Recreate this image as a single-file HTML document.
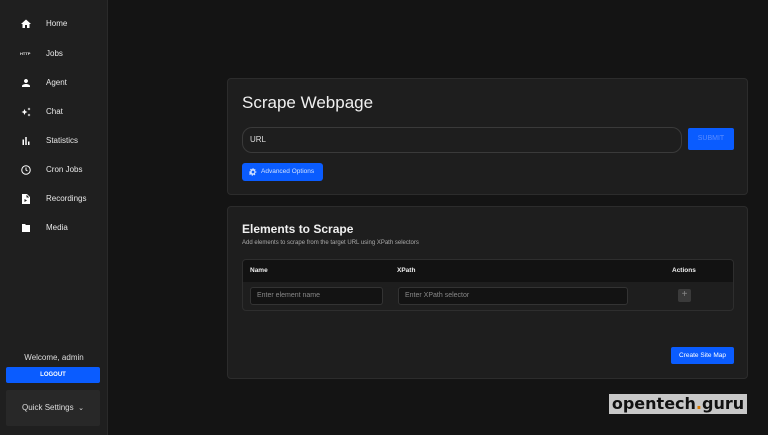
<!DOCTYPE html>
<html><head><meta charset="utf-8"><style>
*{box-sizing:border-box;margin:0;padding:0}
body{width:768px;height:435px;background:#141414;font-family:"Liberation Sans",sans-serif;color:#eee;position:relative;overflow:hidden}
.sb{position:absolute;left:0;top:0;width:108px;height:435px;background:#1f1f1f;border-right:1px solid #2a2a2a}
.it{position:absolute;left:20px;font-size:8px;color:#e8e8e8;height:12px;line-height:12px}
.it svg{position:absolute;left:0;top:0}
.it span{position:absolute;left:26px;white-space:nowrap}
.card{position:absolute;left:227px;width:521px;background:#1e1e1e;border:1px solid #2c2c2c;border-radius:4px}
.abs{position:absolute}
</style></head><body>
<div class="sb">
<div class="it" style="top:18px"><svg width="12" height="12" viewBox="0 0 24 24"><path fill="#fff" d="M10 20v-6h4v6h5v-8h3L12 3 2 12h3v8z"/></svg><span>Home</span></div>
<div class="it" style="top:48px"><span style="left:0;font-size:4px;font-weight:bold">HTTP</span><span>Jobs</span></div>
<div class="it" style="top:77px"><svg width="12" height="12" viewBox="0 0 24 24"><path fill="#fff" d="M12 12c2.2 0 4-1.8 4-4s-1.8-4-4-4-4 1.8-4 4 1.8 4 4 4zm0 2c-2.7 0-8 1.3-8 4v2h16v-2c0-2.7-5.3-4-8-4z"/></svg><span>Agent</span></div>
<div class="it" style="top:106px"><svg width="12" height="12" viewBox="0 0 24 24"><path fill="#fff" d="M9 6l1.8 4.2L15 12l-4.2 1.8L9 18l-1.8-4.2L3 12l4.2-1.8zM18 3l1 2 2 1-2 1-1 2-1-2-2-1 2-1zM18 15l1 2 2 1-2 1-1 2-1-2-2-1 2-1z"/></svg><span>Chat</span></div>
<div class="it" style="top:135px"><svg width="12" height="12" viewBox="0 0 24 24"><path fill="#fff" d="M5 9h3v11H5zM10.5 4h3v16h-3zM16 13h3v7h-3z"/></svg><span>Statistics</span></div>
<div class="it" style="top:164px"><svg width="12" height="12" viewBox="0 0 24 24"><circle cx="12" cy="12" r="8.5" fill="none" stroke="#fff" stroke-width="2"/><path d="M12 7v5l3 2" fill="none" stroke="#fff" stroke-width="2"/></svg><span>Cron Jobs</span></div>
<div class="it" style="top:193px"><svg width="12" height="12" viewBox="0 0 24 24"><path fill="#fff" d="M6 2h8l6 6v14H4V2zm7 1.5V9h5.5zM9 12v6l5-3z"/></svg><span>Recordings</span></div>
<div class="it" style="top:222px"><svg width="12" height="12" viewBox="0 0 24 24"><path fill="#fff" d="M10 4H4v16h16V6h-8z"/></svg><span>Media</span></div>
<div class="abs" style="left:0;width:108px;top:353px;text-align:center;font-size:8px;color:#ddd">Welcome, admin</div>
<div class="abs" style="left:6px;top:367px;width:94px;height:16px;background:#0a5cff;border-radius:2px;font-size:6px;font-weight:bold;text-align:center;line-height:16px;color:#fff">LOGOUT</div>
<div class="abs" style="left:6px;top:390px;width:94px;height:36px;background:#282828;border-radius:2px;font-size:8px;text-align:center;line-height:36px;color:#ddd">Quick Settings &nbsp;<span style="font-size:7px">&#8964;</span></div>
</div>

<div class="card" style="top:78px;height:117px">
<div class="abs" style="left:14px;top:14px;font-size:17px;color:#f0f0f0">Scrape Webpage</div>
<div class="abs" style="left:14px;top:48px;width:440px;height:26px;border:1px solid #3a3a3a;border-radius:10px;font-size:8px;line-height:24px;padding-left:7px;color:#ddd">URL</div>
<div class="abs" style="left:460px;top:49px;width:46px;height:22px;background:#0a5cff;border-radius:2px;font-size:7px;line-height:22px;text-align:center;color:#5a8cff">SUBMIT</div>
<div class="abs" style="left:14px;top:84px;width:81px;height:18px;background:#0a5cff;border-radius:3px;font-size:6.5px;line-height:18px;color:#cfe0ff;padding-left:19px"><svg class="abs" style="left:7px;top:5px" width="8" height="8" viewBox="0 0 24 24"><path fill="#cfe0ff" d="M12 8a4 4 0 100 8 4 4 0 000-8zM10 1h4l1 3 3-1 2 3-2 2 .5 2H22v4h-3l-1 3 1 3-3 2-2-2-2 .5V23h-4v-3l-3-1-2 2-3-3 2-2-.5-2H1v-4h3l1-3-2-2 3-3 2 2 2-.5z"/></svg>Advanced Options</div>
</div>

<div class="card" style="top:206px;height:173px">
<div class="abs" style="left:14px;top:15px;font-size:12px;font-weight:bold;color:#f0f0f0">Elements to Scrape</div>
<div class="abs" style="left:14px;top:33px;font-size:6px;color:#aaa">Add elements to scrape from the target URL using XPath selectors</div>
<div class="abs" style="left:14px;top:52px;width:492px;height:52px;border:1px solid #2e2e2e;border-radius:4px;overflow:hidden">
<div class="abs" style="left:0;top:0;width:100%;height:22px;background:#121212"></div>
<div class="abs" style="left:7px;top:7px;font-size:6.5px;font-weight:bold">Name</div>
<div class="abs" style="left:154px;top:7px;font-size:6.5px;font-weight:bold">XPath</div>
<div class="abs" style="left:429px;top:7px;font-size:6.5px;font-weight:bold">Actions</div>
<div class="abs" style="left:7px;top:27px;width:133px;height:18px;background:#131313;border:1px solid #333;border-radius:3px;font-size:7px;line-height:16px;padding-left:6px;color:#888">Enter element name</div>
<div class="abs" style="left:155px;top:27px;width:230px;height:18px;background:#131313;border:1px solid #333;border-radius:3px;font-size:7px;line-height:16px;padding-left:6px;color:#888">Enter XPath selector</div>
<div class="abs" style="left:435px;top:29px;width:13px;height:13px;background:#3a3a3a;border-radius:2px;font-size:10px;line-height:12px;text-align:center;color:#888">+</div>
</div>
<div class="abs" style="left:443px;top:140px;width:63px;height:17px;background:#0a5cff;border-radius:2px;font-size:6.5px;line-height:17px;text-align:center;color:#fff">Create Site Map</div>
</div>

<div class="abs" style="left:609px;top:394px;width:138px;height:20px;background:#c8c8c8;font-family:'DejaVu Sans',sans-serif;font-size:16px;font-weight:bold;line-height:20px;color:#111;text-align:center;white-space:nowrap;overflow:hidden">opentech<span style="color:#d97a00">.</span>guru</div>
</body></html>
